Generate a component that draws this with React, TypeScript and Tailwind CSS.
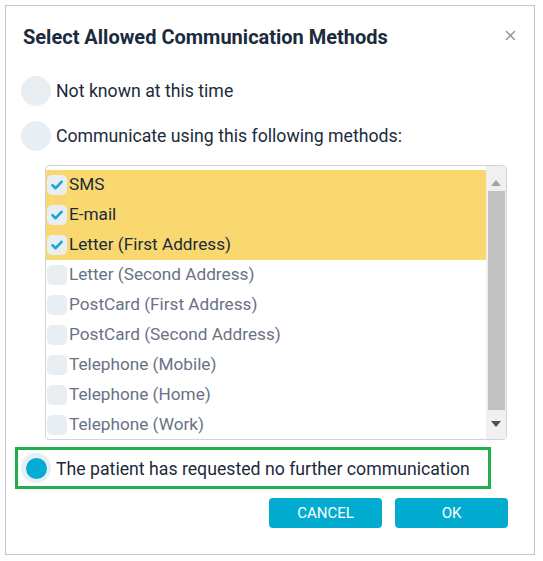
import React from "react";

const items = [
  { label: "SMS", checked: true },
  { label: "E-mail", checked: true },
  { label: "Letter (First Address)", checked: true },
  { label: "Letter (Second Address)", checked: false },
  { label: "PostCard (First Address)", checked: false },
  { label: "PostCard (Second Address)", checked: false },
  { label: "Telephone (Mobile)", checked: false },
  { label: "Telephone (Home)", checked: false },
  { label: "Telephone (Work)", checked: false },
];

function Check() {
  return (
    <svg width="14" height="14" viewBox="0 0 14 14">
      <path d="M2.5 7.2 L5.6 10.2 L11.6 3.8" fill="none" stroke="#12a9d2" strokeWidth="2.6" strokeLinecap="round" strokeLinejoin="round" />
    </svg>
  );
}

export default function App() {
  return (
    <div className="w-[543px] h-[561px] bg-white" style={{ fontFamily: "Roboto, 'Liberation Sans', sans-serif" }}>
      <div className="ml-[5px] pt-[5px]">
        <div className="w-[530px] h-[550px] border border-[#c6c6c6] bg-white flex flex-col">
          <div className="h-[62px] flex items-center justify-between pl-[17px] pr-[18px]">
            <div className="text-[20px] font-bold text-[#1b2b3c] leading-6">Select Allowed Communication Methods</div>
            <svg width="11" height="11" viewBox="0 0 11 11" className="-mt-[4px]">
              <path d="M1 1 L10 10 M10 1 L1 10" stroke="#8a9199" strokeWidth="1.3" />
            </svg>
          </div>
          <div className="mt-[8px] ml-[15px] flex items-center h-[30px]">
            <div className="w-[30px] h-[30px] rounded-full bg-[#e9eef2]" />
            <span className="ml-[5px] text-[17.7px] text-[#1b2b3c]">Not known at this time</span>
          </div>
          <div className="mt-[15px] ml-[15px] flex items-center h-[30px]">
            <div className="w-[30px] h-[30px] rounded-full bg-[#e9eef2]" />
            <span className="ml-[5px] text-[17.7px] text-[#1b2b3c]">Communicate using this following methods:</span>
          </div>
          <div className="mt-[14px] ml-[39px] w-[462px] h-[275px] border border-[#cdd5de] rounded-[4px] flex overflow-hidden">
            <div className="flex-1 pt-[4px] overflow-hidden">
              {items.map((it) => (
                <div
                  key={it.label}
                  className={`h-[30px] flex items-center pl-[1px] ${it.checked ? "bg-[#f8d86f]" : ""}`}
                >
                  <div className="w-[20px] h-[20px] rounded-[5px] bg-[#e9eef2] flex items-center justify-center">
                    {it.checked && <Check />}
                  </div>
                  <span className={`ml-[2px] text-[17.2px] ${it.checked ? "text-[#1b2b3c]" : "text-[#697284]"}`}>{it.label}</span>
                </div>
              ))}
            </div>
            <div className="w-[20px] bg-[#f0f0f0] flex flex-col items-center">
              <div className="h-[25px] flex items-center justify-center pt-[8px]">
                <svg width="10" height="6" viewBox="0 0 10 6"><path d="M0 6 L5 0 L10 6 Z" fill="#a3a3a3" /></svg>
              </div>
              <div className="w-[17px] h-[219px] bg-[#c1c1c1]" />
              <div className="h-[28px] flex items-center justify-center">
                <svg width="10" height="6" viewBox="0 0 10 6"><path d="M0 0 L10 0 L5 6 Z" fill="#505050" /></svg>
              </div>
            </div>
          </div>
          <div className="mt-[7px] ml-[9px] w-[476px] h-[42px] border-[3px] border-[#22ae4a] flex items-center pl-[3px]">
            <div className="w-[30px] h-[30px] rounded-full bg-[#e9eef2] flex items-center justify-center">
              <div className="w-[21px] h-[21px] rounded-full bg-[#02acd3]" />
            </div>
            <span className="ml-[5px] text-[17.7px] text-[#1b2b3c] mt-[2px]">The patient has requested no further communication</span>
          </div>
          <div className="mt-[9px] mr-[26px] flex justify-end gap-[13px]">
            <button className="w-[113px] h-[30px] rounded-[4px] bg-[#02acd1] text-white text-[15px] font-normal">CANCEL</button>
            <button className="w-[113px] h-[30px] rounded-[4px] bg-[#02acd1] text-white text-[15px] font-normal">OK</button>
          </div>
        </div>
      </div>
    </div>
  );
}
